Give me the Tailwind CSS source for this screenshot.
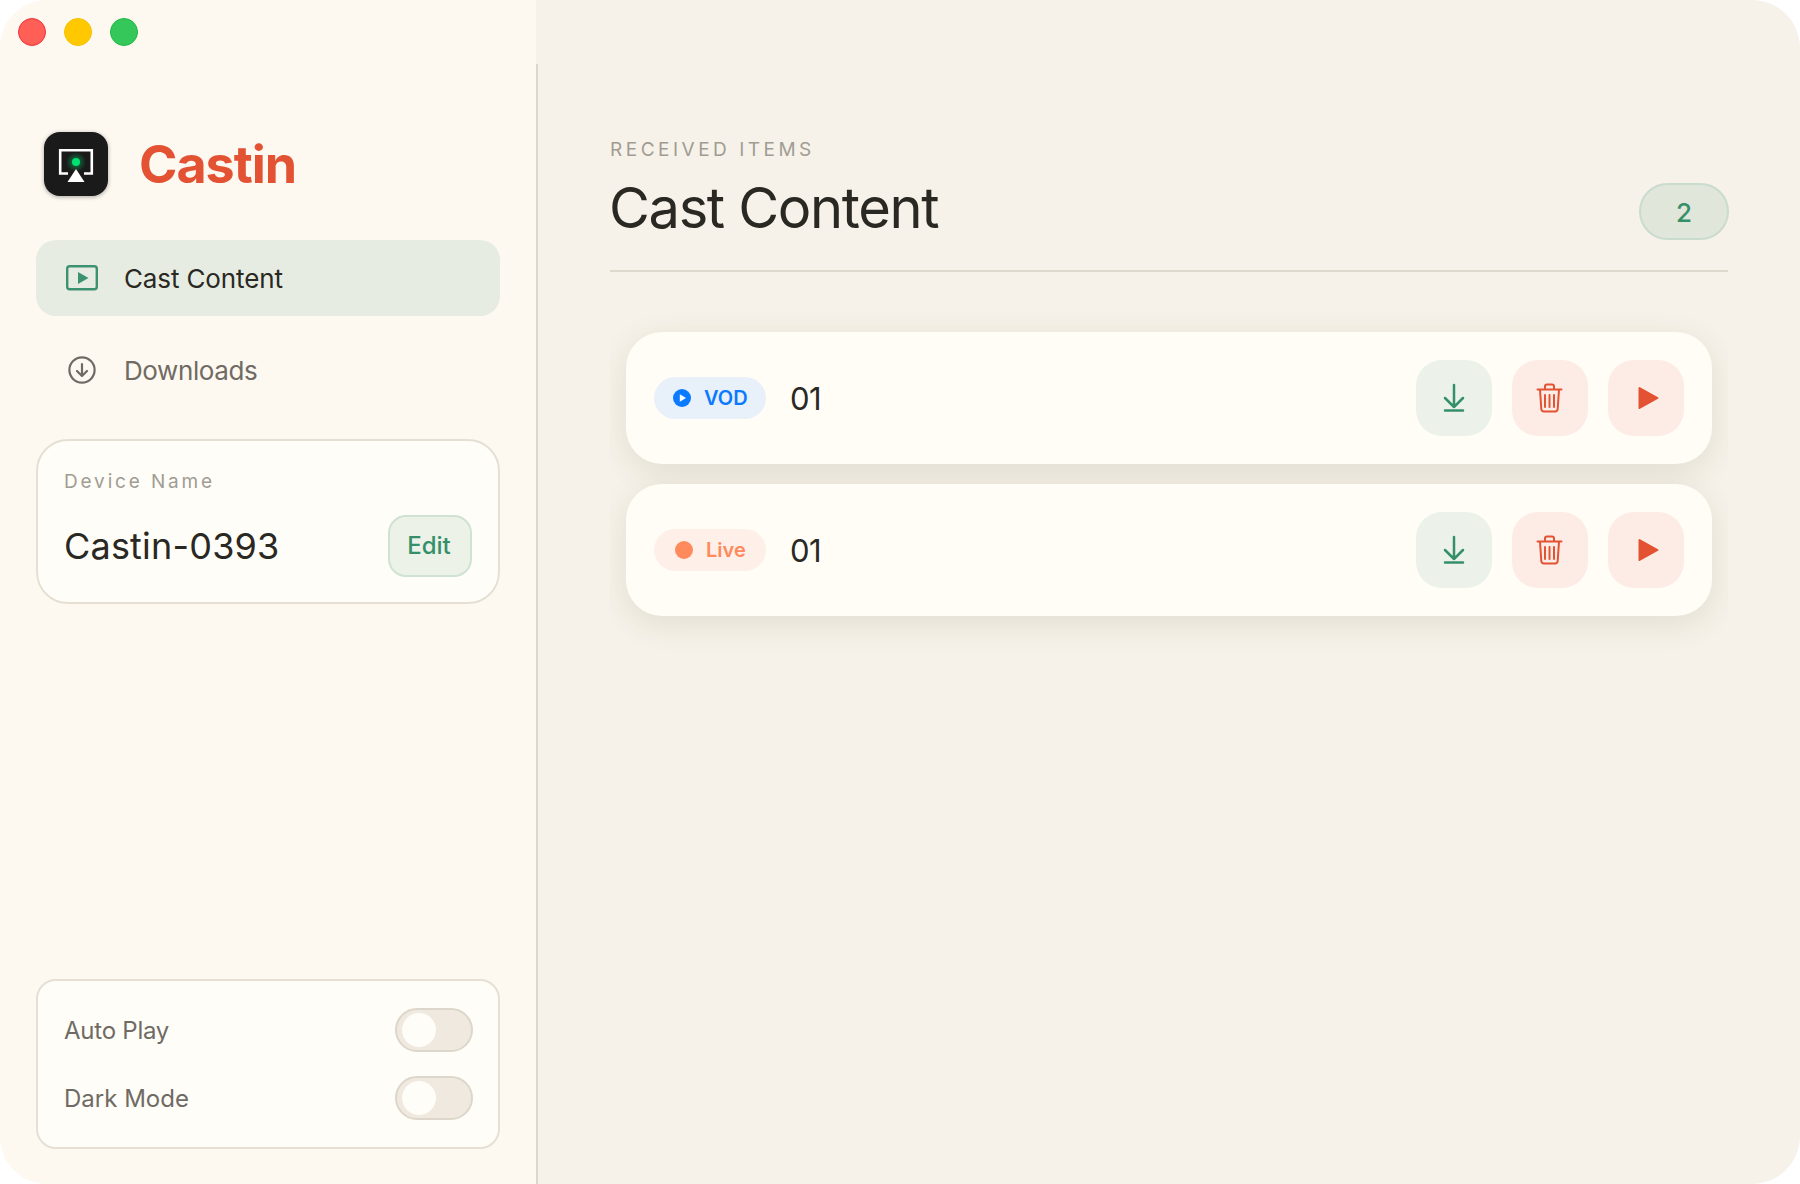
<!DOCTYPE html>
<html lang="en">
<head>
<meta charset="utf-8">
<title>Castin</title>
<script src="https://cdn.jsdelivr.net/npm/@tailwindcss/browser@4"></script>
</head>
<body class="bg-white">
<div class="relative flex w-[1800px] h-[1184px] overflow-hidden rounded-[48px] bg-[#f6f2e9] font-['Inter','Liberation_Sans',sans-serif] text-[#2a2822]">

  <div class="absolute left-[18px] top-[18px] flex gap-[18px]">
    <span class="w-7 h-7 rounded-full bg-[#ff5f57] border border-[#f0333a]"></span>
    <span class="w-7 h-7 rounded-full bg-[#ffc800] border border-[#f5c000]"></span>
    <span class="w-7 h-7 rounded-full bg-[#34c759] border border-[#1fb841]"></span>
  </div>

  <aside class="flex flex-col w-[536px] h-full shrink-0 bg-[#fdf9f1] px-9 pt-[132px] pb-[35px]">
    <div class="flex items-center gap-[31px] pl-2 h-16 mb-[44px]">
      <div class="flex items-center justify-center w-16 h-16 rounded-2xl bg-[#1a1a1a] shadow-[0_1px_4px_rgba(0,0,0,0.35)]">
        <svg width="64" height="64" viewBox="0 0 64 64" fill="none">
          <defs><radialGradient id="glow"><stop offset="0" stop-color="#00e070" stop-opacity=".55"/><stop offset="1" stop-color="#00e070" stop-opacity="0"/></radialGradient></defs>
          <path d="M24 41.5H16.2V18.2H47.8V41.5H40" stroke="#fff" stroke-width="2.6"/>
          <circle cx="32" cy="30" r="10" fill="url(#glow)"/>
          <circle cx="32" cy="30" r="4" fill="#00e070"/>
          <path d="M32 37L40.5 50H23.5Z" fill="#fff"/>
        </svg>
      </div>
      <span class="mt-[2px] text-[52px] leading-none font-bold tracking-[-0.02em] text-[#e35232]">Castin</span>
    </div>

    <nav class="flex flex-col gap-4">
      <div class="flex items-center h-[76px] rounded-[20px] bg-[#e6ece2] pl-[30px] gap-[26px]">
        <svg class="shrink-0" width="32" height="26" viewBox="0 0 32 26" fill="none">
          <rect x="1.2" y="1.2" width="29.6" height="23.1" rx="2.5" stroke="#3c9170" stroke-width="2.4"/>
          <path d="M12 7L22.5 13L12 19Z" fill="#3c9170"/>
        </svg>
        <span class="mt-[2px] text-[26px] leading-none tracking-[-0.005em]">Cast Content</span>
      </div>
      <div class="flex items-center h-[76px] rounded-[20px] pl-[30px] gap-[26px] text-[#6f6b64]">
        <svg class="shrink-0" width="32" height="28" viewBox="0 0 32 28" fill="none" stroke="#6f6b64" stroke-width="2.2" stroke-linecap="round" stroke-linejoin="round">
          <circle cx="16" cy="14" r="12.6"/>
          <path d="M16 8V19.5M11 15L16 20L21 15"/>
        </svg>
        <span class="mt-[2px] text-[26px] leading-none tracking-[-0.015em]">Downloads</span>
      </div>
    </nav>

    <section class="mt-[31px] h-[165px] rounded-[32px] border-2 border-[#e6e0d4] bg-[#fffdf7] pl-[26px] pr-[26px] pt-[29px]">
      <div class="h-6 text-[19px] leading-6 tracking-[0.15em] text-[#a09c94]">Device Name</div>
      <div class="flex items-center justify-between mt-[21px]">
        <span class="text-[36px] leading-none tracking-[0.2px]">Castin-0393</span>
        <button class="flex items-center justify-center w-[84px] h-[62px] rounded-[18px] border-2 border-[#cfe2d4] bg-[#ecf2e8] pr-[2px] text-[24px] font-[450] text-[#35906a]">Edit</button>
      </div>
    </section>

    <section class="mt-auto flex flex-col gap-6 rounded-[20px] border-2 border-[#e6e0d4] bg-[#fffdf7] pl-[26px] pr-[25px] py-[27px]">
      <div class="flex items-center justify-between">
        <span class="mt-[2px] text-[24px] leading-none tracking-[-0.01em] text-[#6f6b64]">Auto Play</span>
        <div class="flex items-center w-[78px] h-11 rounded-full border-2 border-[#ddd7cb] bg-[#efe9e0] pl-[5px]"><span class="w-[34px] h-[34px] rounded-full bg-[#fffdf7]"></span></div>
      </div>
      <div class="flex items-center justify-between">
        <span class="mt-[2px] text-[24px] leading-none text-[#6f6b64]">Dark Mode</span>
        <div class="flex items-center w-[78px] h-11 rounded-full border-2 border-[#ddd7cb] bg-[#efe9e0] pl-[5px]"><span class="w-[34px] h-[34px] rounded-full bg-[#fffdf7]"></span></div>
      </div>
    </section>
  </aside>

  <main class="flex flex-col flex-1 min-w-0 pt-16">
    <div class="flex flex-col flex-1 min-h-0 border-l-2 border-[#dcd8cd] px-[72px] pt-[74px]">
      <header class="flex items-end justify-between border-b-2 border-[#ddd9cc] pb-[30px]">
        <div>
          <div class="h-6 text-[19px] leading-6 tracking-[3.5px] text-[#a09c94]">RECEIVED ITEMS</div>
          <h1 class="-ml-px mt-[14px] text-[56px] leading-[64px] font-normal tracking-[-1.35px]">Cast Content</h1>
        </div>
        <div class="flex items-center justify-center -mr-px w-[90px] h-[57px] rounded-full border-2 border-[#c9dccd] bg-[#e0e6da] pt-[2px] text-[26px] font-[450] text-[#35906a]">2</div>
      </header>

      <div class="flex flex-col gap-5 flex-1 min-h-0 overflow-hidden mt-[38px] pt-[22px] px-4">
        <article class="flex items-center h-[132px] shrink-0 rounded-[36px] bg-[#fffdf6] px-7 shadow-[0_8px_32px_rgba(70,60,30,0.11)]">
          <div class="flex items-center w-28 h-[42px] rounded-full bg-[#e8f0f9] pl-[19px] gap-[13px] text-[20px] font-semibold text-[#0a7aff]">
            <svg width="18" height="18" viewBox="0 0 18 18"><circle cx="9" cy="9" r="9" fill="#0a7aff"/><path d="M6.800 5.200L13 9L6.800 12.800Z" fill="#fff"/></svg>
            <span>VOD</span>
          </div>
          <span class="ml-6 text-[31px] leading-none tracking-[-0.02em]">01</span>
          <div class="flex gap-5 ml-auto">
            <button class="flex items-center justify-center w-[76px] h-[76px] rounded-[26px] bg-[#ecf2e9]">
              <svg width="24" height="30" viewBox="0 0 24 30" fill="none" stroke="#35906a" stroke-width="2.5" stroke-linecap="round" stroke-linejoin="round"><path d="M12 2V24M3 15L12 24L21 15M3 27.500H21"/></svg>
            </button>
            <button class="flex items-center justify-center w-[76px] h-[76px] rounded-[26px] bg-[#fdece5]">
              <svg width="28" height="30" viewBox="0 0 28 30" fill="none" stroke="#e35232" stroke-width="2" stroke-linecap="round" stroke-linejoin="round"><path d="M1.500 6.500H25.500M9 6V3.500A2 2 0 0 1 11 1.500H16A2 2 0 0 1 18 3.500V6M4 6.500L5.300 26A2.500 2.500 0 0 0 7.800 28.500H19.200A2.500 2.500 0 0 0 21.700 26L23 6.500M9 12V24M13.500 12V24M18 12V24"/></svg>
            </button>
            <button class="flex items-center justify-center w-[76px] h-[76px] rounded-[26px] bg-[#fdece5]">
              <svg class="ml-1" width="22" height="24" viewBox="0 0 22 24"><path d="M2.500 2L20.500 12L2.500 22Z" fill="#e35232" stroke="#e35232" stroke-width="2" stroke-linejoin="round"/></svg>
            </button>
          </div>
        </article>

        <article class="flex items-center h-[132px] shrink-0 rounded-[36px] bg-[#fffdf6] px-7 shadow-[0_8px_32px_rgba(70,60,30,0.11)]">
          <div class="flex items-center w-28 h-[42px] rounded-full bg-[#fef0e8] pl-[21px] gap-[13px] text-[20px] font-semibold text-[#ff8a5c]">
            <span class="w-[18px] h-[18px] rounded-full bg-[#ff8a5c]"></span>
            <span>Live</span>
          </div>
          <span class="ml-6 text-[31px] leading-none tracking-[-0.02em]">01</span>
          <div class="flex gap-5 ml-auto">
            <button class="flex items-center justify-center w-[76px] h-[76px] rounded-[26px] bg-[#ecf2e9]">
              <svg width="24" height="30" viewBox="0 0 24 30" fill="none" stroke="#35906a" stroke-width="2.5" stroke-linecap="round" stroke-linejoin="round"><path d="M12 2V24M3 15L12 24L21 15M3 27.500H21"/></svg>
            </button>
            <button class="flex items-center justify-center w-[76px] h-[76px] rounded-[26px] bg-[#fdece5]">
              <svg width="28" height="30" viewBox="0 0 28 30" fill="none" stroke="#e35232" stroke-width="2" stroke-linecap="round" stroke-linejoin="round"><path d="M1.500 6.500H25.500M9 6V3.500A2 2 0 0 1 11 1.500H16A2 2 0 0 1 18 3.500V6M4 6.500L5.300 26A2.500 2.500 0 0 0 7.800 28.500H19.200A2.500 2.500 0 0 0 21.700 26L23 6.500M9 12V24M13.500 12V24M18 12V24"/></svg>
            </button>
            <button class="flex items-center justify-center w-[76px] h-[76px] rounded-[26px] bg-[#fdece5]">
              <svg class="ml-1" width="22" height="24" viewBox="0 0 22 24"><path d="M2.500 2L20.500 12L2.500 22Z" fill="#e35232" stroke="#e35232" stroke-width="2" stroke-linejoin="round"/></svg>
            </button>
          </div>
        </article>
      </div>
    </div>
  </main>
</div>
</body>
</html>
